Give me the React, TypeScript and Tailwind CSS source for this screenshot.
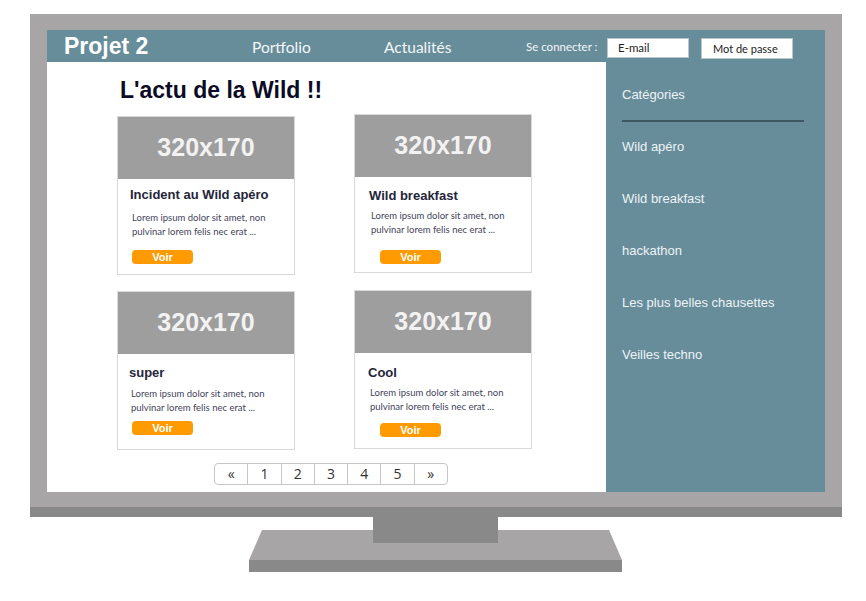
import React from 'react';

/**
 * Maquette "Projet 2" affichée dans un écran d'ordinateur.
 * - barre d'en-tête (logo, navigation, connexion)
 * - grille de 4 articles + pagination
 * - barre latérale des catégories
 */

type Article = {
  title: string;
  mt: string;
  pad: string;
  lorem: string;
  btn: string;
};

const articles: Article[] = [
  { title: 'Incident au Wild apéro', mt: '', pad: 'pl-[12px] pt-[7px]', lorem: 'mt-[7px]', btn: 'ml-[2px] mt-[11px]' },
  { title: 'Wild breakfast', mt: '', pad: 'pl-[14px] pt-[10px]', lorem: 'mt-[4px]', btn: 'ml-[11px] mt-[13px]' },
  { title: 'super', mt: 'mt-[16px]', pad: 'pl-[11px] pt-[10px]', lorem: 'mt-[5px]', btn: 'ml-[3px] mt-[6px]' },
  { title: 'Cool', mt: 'mt-[17px]', pad: 'pl-[13px] pt-[11px]', lorem: 'mt-[4px]', btn: 'ml-[12px] mt-[9px]' },
];

const categories = ['Wild apéro', 'Wild breakfast', 'hackathon', 'Les plus belles chausettes', 'Veilles techno'];

function Card({ a }: { a: Article }) {
  return (
    <div className={`w-[178px] h-[159px] border border-[#d9d9d9] bg-white ${a.mt}`}>
      <div className="h-[62px] bg-[#9e9e9e] flex items-center justify-center text-[25px] font-bold text-[#f2f2f2] font-['Liberation_Sans',sans-serif]">
        320x170
      </div>
      <div className={a.pad}>
        <h3 className="text-[13px] font-bold text-[#25253a] font-['Liberation_Sans',sans-serif] leading-[18px]">{a.title}</h3>
        <p className={`${a.lorem} pl-[2px] text-[9.5px] leading-[14px] text-[#44445a] font-['Lato',sans-serif]`}>
          Lorem ipsum dolor sit amet, non
          <br />
          pulvinar lorem felis nec erat ...
        </p>
        <button className={`${a.btn} w-[61px] h-[14px] rounded-[4px] bg-[#ff9a00] text-white text-[11px] font-bold leading-[14px] font-['Liberation_Sans',sans-serif] flex items-center justify-center`}>
          Voir
        </button>
      </div>
    </div>
  );
}

export default function App() {
  return (
    <div className="w-[866px] h-[601px] bg-white overflow-hidden">
      {/* cadre de l'écran */}
      <div className="ml-[30px] mt-[14px] w-[812px] bg-[#a7a5a6] pl-[17px] pr-[17px] pt-[16px] pb-[15px]">
        <div className="w-[778px] h-[462px] flex flex-col">
          {/* en-tête */}
          <header className="h-[32px] bg-[#678d9b] flex items-center text-white">
            <span className="ml-[17px] w-[188px] text-[23px] font-bold font-['Liberation_Sans',sans-serif]">Projet 2</span>
            <span className="w-[132px] mt-[3px] text-[15.5px] font-['Lato',sans-serif] text-[#f4f7f8]">Portfolio</span>
            <span className="w-[142px] mt-[3px] text-[15.5px] font-['Lato',sans-serif] text-[#f4f7f8]">Actualités</span>
            <span className="w-[81px] mt-[2px] text-[11.5px] font-['Lato',sans-serif] text-[#f4f7f8]">Se connecter :</span>
            <div className="mt-[3px] w-[82px] h-[20px] bg-white border border-[#b9c7cc] text-[11.5px] text-[#222] pl-[10px] leading-[17px] font-['Lato',sans-serif]">
              E-mail
            </div>
            <div className="ml-[12px] mt-[5px] w-[92px] h-[21px] bg-white border border-[#b9c7cc] text-[11px] text-[#222] pl-[11px] leading-[19px] font-['Lato',sans-serif]">
              Mot de passe
            </div>
          </header>

          <div className="flex flex-1">
            {/* contenu principal */}
            <main className="w-[559px] bg-white pl-[70px] pt-[14px]">
              <h1 className="ml-[3px] text-[23px] font-bold leading-[28px] text-[#0b0b25] font-['Liberation_Sans',sans-serif]">
                L'actu de la Wild !!
              </h1>
              <div className="grid grid-cols-[178px_178px] gap-x-[59px] mt-[12px]">
                <div className="flex flex-col">
                  <Card a={articles[0]} />
                  <Card a={articles[2]} />
                </div>
                <div className="flex flex-col -mt-[2px]">
                  <Card a={articles[1]} />
                  <Card a={articles[3]} />
                </div>
              </div>
              {/* pagination */}
              <div className="ml-[97px] mt-[13px] flex w-[234px] h-[22px] border border-[#c6c6c6] rounded-[4px] text-[14px] text-[#333] font-['Open_Sans',sans-serif]">
                {['«', '1', '2', '3', '4', '5', '»'].map((p, i) => (
                  <div
                    key={p}
                    className={`flex-1 flex items-center justify-center leading-none ${i > 0 ? 'border-l border-[#c6c6c6]' : ''}`}
                  >
                    {p}
                  </div>
                ))}
              </div>
            </main>

            {/* barre latérale */}
            <aside className="flex-1 bg-[#678d9b] pl-[16px] pt-[25px] text-[13px] text-[#eef3f5] font-['Liberation_Sans',sans-serif]">
              <div className="leading-[16px]">Catégories</div>
              <div className="mt-[17px] w-[182px] h-[2px] bg-[#3f5663]" />
              <ul className="mt-[17px] flex flex-col gap-[36px]">
                {categories.map((c) => (
                  <li key={c} className="leading-[16px]">{c}</li>
                ))}
              </ul>
            </aside>
          </div>
        </div>
      </div>
      <div className="ml-[30px] w-[812px] h-[10px] bg-[#898989]" />

      {/* pied de l'écran */}
      <svg className="ml-[249px]" width="374" height="56" viewBox="0 0 374 56">
        <polygon points="13,13 360,13 373,43 0,43" fill="#a7a5a6" />
        <rect x="0" y="43" width="373" height="12" fill="#898989" />
        <rect x="124" y="0" width="125" height="26" fill="#898989" />
      </svg>
    </div>
  );
}
